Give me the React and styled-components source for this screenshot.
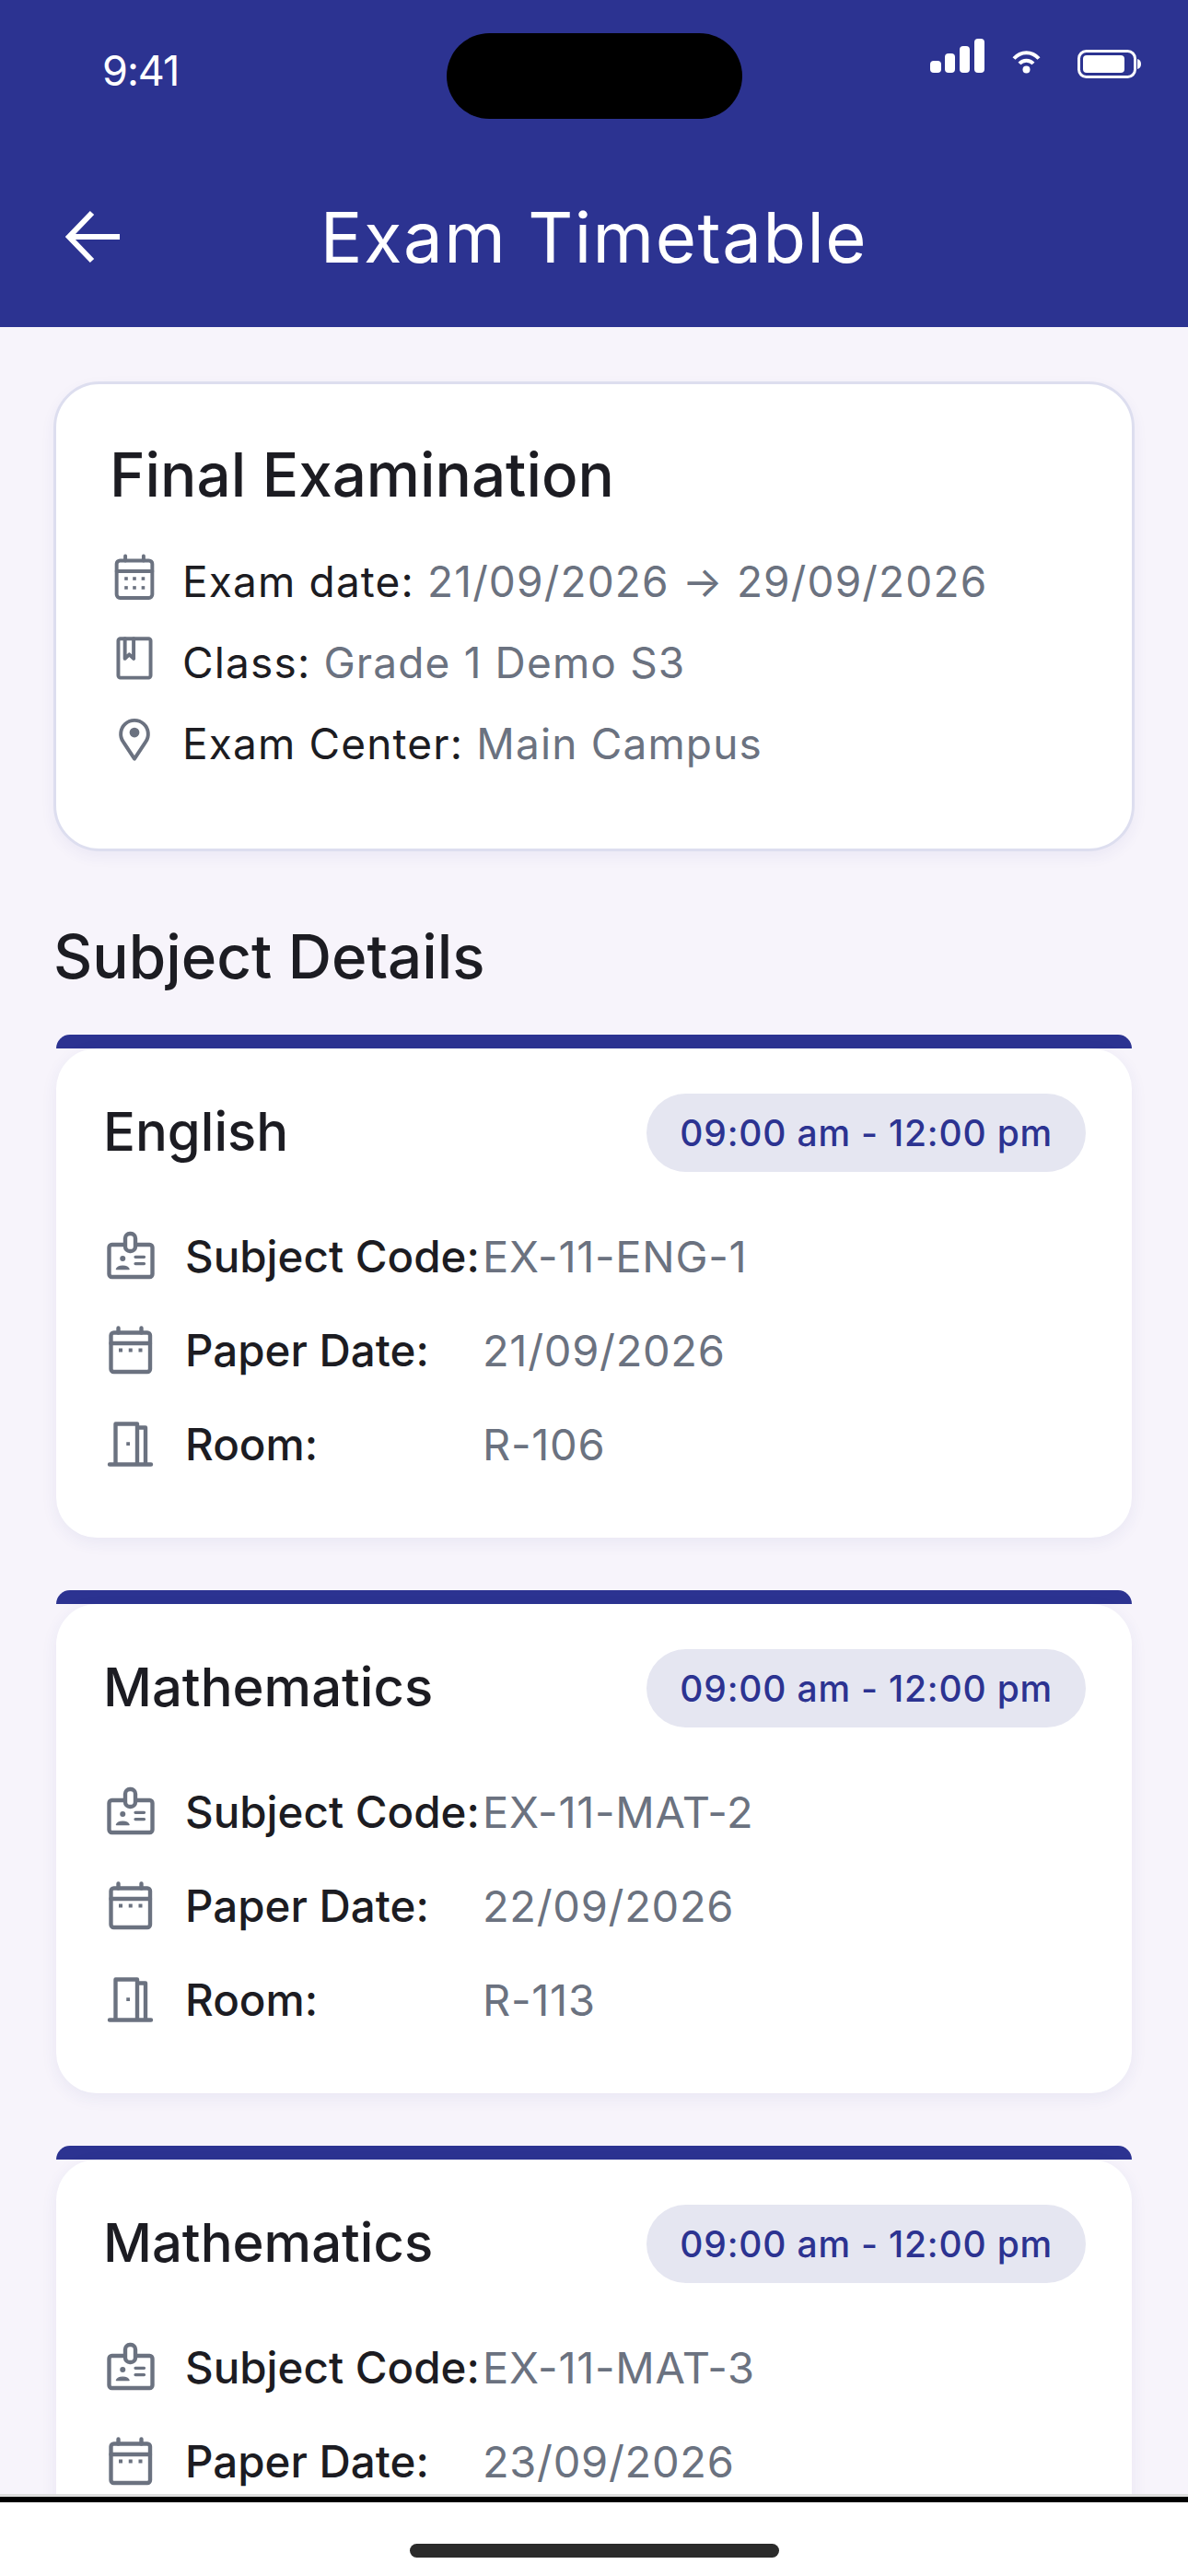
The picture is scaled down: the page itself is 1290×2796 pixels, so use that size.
import React from 'react'
import styled, { createGlobalStyle } from 'styled-components'

const GlobalStyle = createGlobalStyle`
  html, body { margin: 0; padding: 0; background: #fff; }
  body { font-family: Inter, "Noto Sans", sans-serif; }
`

const Screen = styled.div`
  width: 1290px;
  height: 2796px;
  display: flex;
  flex-direction: column;
  overflow: hidden;
  background: #f7f4fb;
`

const Header = styled.header`
  flex: none;
  height: 355px;
  background: #2c3391;
  color: #fff;
  position: relative;
`

const Island = styled.div`
  position: absolute;
  left: 485px;
  top: 36px;
  width: 321px;
  height: 93px;
  border-radius: 47px;
  background: #000;
`

const StatusBar = styled.div`
  height: 221px;
  display: flex;
  justify-content: space-between;
  align-items: flex-start;
  padding: 0 51px 0 111px;
  box-sizing: border-box;
`

const Clock = styled.div`
  font-size: 45px;
  line-height: 54px;
  margin-top: 50px;
  letter-spacing: -1px;
`

const StatusIcons = styled.div`
  display: flex;
  align-items: flex-start;
  margin-top: 42px;
`

const NavBar = styled.div`
  display: grid;
  grid-template-columns: 60px 1fr 60px;
  align-items: center;
  padding: 0 71px;
  height: 72px;
`

const Title = styled.h1`
  margin: 0;
  text-align: center;
  font-size: 76px;
  line-height: 72px;
  font-weight: 400;
  letter-spacing: 1.5px;
`

const Content = styled.main`
  flex: 1;
  min-height: 0;
  overflow: hidden;
  padding: 59px 58px 0;
  border-bottom: 3px solid #dedede;
`

const SummaryCard = styled.section`
  box-sizing: border-box;
  height: 510px;
  padding: 60px 58px 0;
  background: #fff;
  border: 3px solid #dddeef;
  border-radius: 50px;
  box-shadow: 0 6px 16px rgba(44, 51, 145, 0.06);
`

const ExamName = styled.h2`
  margin: 0 0 32px;
  font-size: 65.5px;
  line-height: 78px;
  font-weight: 500;
  color: #1c1c22;
`

const SummaryRow = styled.div`
  display: flex;
  align-items: center;
  height: 88px;
  gap: 25px;
  font-size: 46px;
  letter-spacing: 1.15px;
  color: #1c1c22;
  svg { margin-bottom: 10px; }
`

const Muted = styled.span`
  color: #6b7280;
`

const SectionTitle = styled.h2`
  margin: 77px 0 46px;
  font-size: 65.5px;
  line-height: 76px;
  font-weight: 500;
  color: #1c1c22;
`

const SubjectCard = styled.article`
  margin: 0 3px 57px;
`

const AccentBar = styled.div`
  height: 15px;
  background: #2c3391;
  border-radius: 18px 18px 0 0;
`

const SubjectBody = styled.div`
  box-sizing: border-box;
  height: 531px;
  padding: 49px 51px 0;
  background: #fff;
  border-radius: 44px;
  box-shadow: 0 5px 18px rgba(44, 51, 145, 0.07);
`

const SubjectHead = styled.div`
  display: flex;
  justify-content: space-between;
  align-items: center;
  margin-bottom: 40px;
`

const SubjectName = styled.h3`
  margin: 0 0 3px;
  font-size: 58px;
  line-height: 82px;
  font-weight: 500;
  color: #1c1c22;
`

const TimePill = styled.div`
  height: 85px;
  padding: 0 36px;
  margin-right: -1px;
  display: flex;
  align-items: center;
  border-radius: 43px;
  background: #e5e6f1;
  color: #2c3391;
  font-size: 39px;
  font-weight: 500;
  letter-spacing: 0.8px;
`

const DetailRow = styled.div`
  display: flex;
  align-items: center;
  height: 102px;
  font-size: 47.5px;
`

const DetailLabel = styled.span`
  flex: none;
  width: 323px;
  margin-left: 29px;
  font-weight: 500;
  color: #1c1c22;
  white-space: nowrap;
`

const DetailValue = styled.span`
  color: #6b7280;
  font-size: 47px;
  letter-spacing: 0.7px;
`

const Footer = styled.footer`
  flex: none;
  height: 86px;
  display: flex;
  justify-content: center;
  background: #fff;
  border-top: 6px solid #000;
  box-sizing: border-box;
`

const HomeBar = styled.div`
  width: 401px;
  height: 15px;
  margin-top: 45px;
  border-radius: 8px;
  background: #2b2b2b;
`

const Icon = ({ size, children }) => (
  <svg
    width={size}
    height={size}
    viewBox="0 0 24 24"
    fill="none"
    stroke="#6b7280"
    strokeWidth="1.75"
    strokeLinecap="round"
    strokeLinejoin="round"
    style={{ flex: 'none' }}
  >
    {children}
  </svg>
)

const Dots = ({ xs, y }) =>
  xs.map((x) => <rect key={x} x={x - 0.8} y={y - 0.8} width="1.6" height="1.6" fill="#6b7280" stroke="none" />)

const CalendarGrid = () => (
  <Icon size={54}>
    <rect x="3.4" y="4.2" width="17.2" height="18" rx="1.6" />
    <path d="M3.4 9.3h17.2M7.6 2v2.2M16.4 2v2.2" />
    <Dots xs={[8, 12, 16.2]} y={12.9} />
    <Dots xs={[8, 12, 16.2]} y={17.3} />
  </Icon>
)

const Book = () => (
  <Icon size={54}>
    <rect x="4.2" y="2.8" width="15.6" height="18.8" rx="1" />
    <path d="M7.4 2.8v9.6l2.1-2 2.1 2V2.8" />
  </Icon>
)

const Pin = () => (
  <Icon size={54}>
    <path d="M12 21.6L6.64 13.5a6.6 6.6 0 1 1 10.72 0z" />
    <circle cx="12" cy="8.9" r="2.4" fill="#6b7280" stroke="none" />
  </Icon>
)

const Badge = () => (
  <Icon size={60}>
    <rect x="2.6" y="7.2" width="18.8" height="14" rx="1.2" />
    <rect x="9.6" y="2.4" width="4.4" height="7.6" rx="2" fill="#fff" />
    <circle cx="8.5" cy="13.2" r="1.2" fill="#6b7280" stroke="none" />
    <path d="M5.8 17.8c.6-1.8 4.8-1.8 5.4 0z" fill="#6b7280" strokeWidth="0.6" />
    <path d="M14 12.5h3.8M14 15.4h3.8" strokeWidth="1.3" />
  </Icon>
)

const CalendarPlain = () => (
  <Icon size={60}>
    <rect x="3.4" y="4.6" width="17" height="17" rx="1.2" />
    <path d="M3.4 9.2h17M6.6 2.6v2M16.6 2.6v2" />
    <Dots xs={[7.6, 11.9, 16.2]} y={12.2} />
  </Icon>
)

const Door = () => (
  <Icon size={60}>
    <path d="M2.8 21h18M5.4 21V3.4h9.4V21M14.8 5h3.6v16" />
    <rect x="10.1" y="11.3" width="1.5" height="1.5" fill="#6b7280" stroke="none" />
  </Icon>
)

const SignalIcon = () => (
  <svg width="59" height="37" viewBox="0 0 59 37" fill="#fff">
    <rect x="0" y="24" width="12" height="13" rx="4" />
    <rect x="16" y="16" width="11" height="21" rx="4" />
    <rect x="32" y="8" width="11" height="29" rx="4" />
    <rect x="48" y="0" width="11" height="37" rx="4" />
  </svg>
)

const WifiIcon = () => (
  <svg width="31" height="28" viewBox="0 0 31 28" fill="none" stroke="#fff" strokeWidth="4" style={{ margin: '10px 40px 0 30px' }}>
    <path d="M2 11.5C9.5 3 21.5 3 29 11.5" />
    <path d="M8 17C12 12.5 19 12.5 23 17" />
    <circle cx="15.5" cy="23.5" r="4" fill="#fff" stroke="none" />
  </svg>
)

const BatteryIcon = () => (
  <svg width="69" height="31" viewBox="0 0 69 31" fill="none" style={{ marginTop: 12 }}>
    <rect x="1.5" y="1.5" width="61" height="28" rx="8" stroke="#fff" strokeWidth="3" />
    <rect x="6" y="6" width="45" height="19" rx="4" fill="#fff" />
    <path d="M65 10c2.5.5 4 2.5 4 5.5s-1.5 5-4 5.5z" fill="#fff" />
  </svg>
)

const subjects = [
  { name: 'English', code: 'EX-11-ENG-1', date: '21/09/2026', room: 'R-106' },
  { name: 'Mathematics', code: 'EX-11-MAT-2', date: '22/09/2026', room: 'R-113' },
  { name: 'Mathematics', code: 'EX-11-MAT-3', date: '23/09/2026', room: null },
]

export default function App() {
  return (
    <Screen>
      <GlobalStyle />
      <Header>
        <Island />
        <StatusBar>
          <Clock>9:41</Clock>
          <StatusIcons>
            <SignalIcon />
            <WifiIcon />
            <BatteryIcon />
          </StatusIcons>
        </StatusBar>
        <NavBar>
          <svg width="60" height="58" viewBox="0 0 60 58" fill="none" stroke="#fff" strokeWidth="6">
            <path d="M59 29H5M29 3L4 29l25 26" />
          </svg>
          <Title>Exam Timetable</Title>
        </NavBar>
      </Header>

      <Content>
        <SummaryCard>
          <ExamName>Final Examination</ExamName>
          <SummaryRow>
            <CalendarGrid />
            <span>Exam date: <Muted>21/09/2026 → 29/09/2026</Muted></span>
          </SummaryRow>
          <SummaryRow>
            <Book />
            <span>Class: <Muted>Grade 1 Demo S3</Muted></span>
          </SummaryRow>
          <SummaryRow>
            <Pin />
            <span>Exam Center: <Muted>Main Campus</Muted></span>
          </SummaryRow>
        </SummaryCard>

        <SectionTitle>Subject Details</SectionTitle>

        {subjects.map((s) => (
          <SubjectCard key={s.code}>
            <AccentBar />
            <SubjectBody>
              <SubjectHead>
                <SubjectName>{s.name}</SubjectName>
                <TimePill>09:00 am - 12:00 pm</TimePill>
              </SubjectHead>
              <DetailRow>
                <Badge />
                <DetailLabel>Subject Code:</DetailLabel>
                <DetailValue>{s.code}</DetailValue>
              </DetailRow>
              <DetailRow>
                <CalendarPlain />
                <DetailLabel>Paper Date:</DetailLabel>
                <DetailValue>{s.date}</DetailValue>
              </DetailRow>
              {s.room && (
                <DetailRow>
                  <Door />
                  <DetailLabel>Room:</DetailLabel>
                  <DetailValue>{s.room}</DetailValue>
                </DetailRow>
              )}
            </SubjectBody>
          </SubjectCard>
        ))}
      </Content>

      <Footer>
        <HomeBar />
      </Footer>
    </Screen>
  )
}
